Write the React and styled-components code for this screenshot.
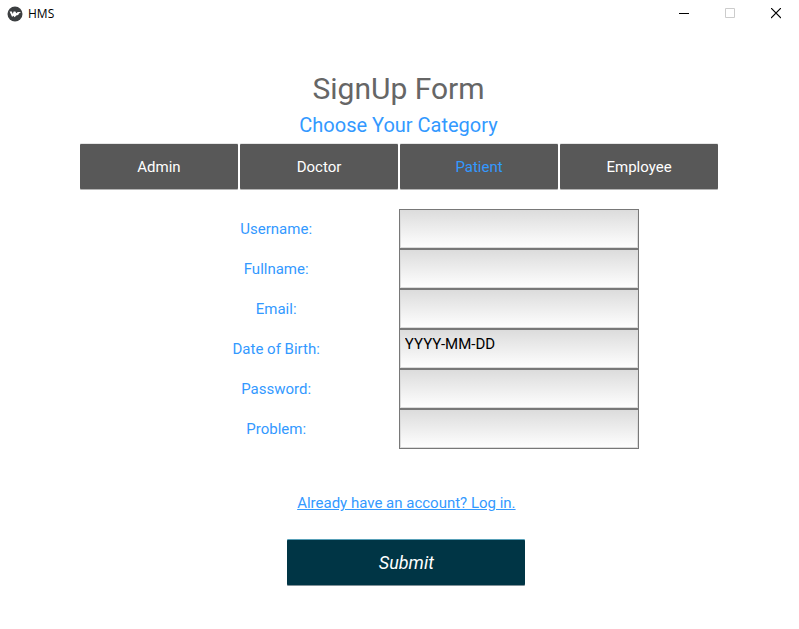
import React, { useState } from "react";
import styled, { createGlobalStyle } from "styled-components";

const GlobalStyle = createGlobalStyle`
  * { box-sizing: border-box; }
  body {
    margin: 0;
    background: #fff;
    font-family: Roboto, "Liberation Sans", sans-serif;
    font-size: 15px;
  }
`;

const TitleBar = styled.header`
  display: flex;
  align-items: center;
  height: 27px;
  padding-left: 7px;
`;

const AppName = styled.span`
  flex: 1;
  margin-left: 5px;
  color: #000;
  font: 12px/16px "Open Sans", "Noto Sans", sans-serif;
`;

const WindowButton = styled.button`
  display: grid;
  place-items: center;
  width: 46px;
  height: 27px;
  padding: 0;
  border: 0;
  background: none;
  color: ${({ disabled }) => (disabled ? "#ccc" : "#000")};
`;

const Page = styled.main`
  display: flex;
  flex-direction: column;
  padding: 42px 10% 43px;
`;

const Title = styled.h1`
  margin: 0;
  padding-right: 2px;
  color: #666;
  font-size: 30px;
  font-weight: 400;
  line-height: 40px;
  text-align: center;
`;

const Subtitle = styled.h2`
  margin: 4px 0 6px;
  padding-right: 2px;
  color: #3399ff;
  font-size: 20px;
  font-weight: 400;
  line-height: 25px;
  text-align: center;
`;

const Categories = styled.nav`
  display: grid;
  grid-template-columns: repeat(4, 1fr);
  gap: 2px;
  padding-right: 1px;
`;

const Button = styled.button`
  height: 45px;
  padding: 0;
  border: 0;
  border-radius: 1px;
  box-shadow: 0 1px 0 #b4b4b4, 0 -1px 0 #e6e6e6;
  background: #585858;
  color: ${({ $active }) => ($active ? "#3399ff" : "#fff")};
  font: inherit;
`;

const Form = styled.form`
  display: flex;
  flex-direction: column;
  padding: 20px 12.5% 0 12.3%;
`;

const Field = styled.div`
  display: grid;
  grid-template-columns: 1fr 1fr;
  align-items: center;
`;

const Label = styled.label`
  padding-right: 5px;
  color: #3399ff;
  line-height: 20px;
  text-align: center;
`;

const Input = styled.input`
  width: 100%;
  height: 40px;
  padding: 0 5px 10px;
  border: 1px solid #787878;
  border-radius: 0;
  outline: none;
  background: linear-gradient(#dcdcdc, #fff);
  box-shadow: inset 0 0 0 1px #dcdcdc;
  color: #000;
  font: inherit;
`;

const Actions = styled.div`
  display: flex;
  flex-direction: column;
  align-items: center;
  gap: 27px;
  padding: 44px 0 0 15px;
`;

const LoginLink = styled.a`
  color: #3399ff;
  line-height: 20px;
  text-underline-offset: 1px;
`;

const Submit = styled(Button)`
  width: 238px;
  background: #003545;
  box-shadow: 0 1px 0 #829299, 0 -1px 0 #58a0b8;
  font-size: 18px;
  font-style: italic;
`;

const CATEGORIES = ["Admin", "Doctor", "Patient", "Employee"];

const FIELDS = [
  { id: "username", label: "Username:" },
  { id: "fullname", label: "Fullname:" },
  { id: "email", label: "Email:" },
  { id: "birth", label: "Date of Birth:", value: "YYYY-MM-DD" },
  { id: "password", label: "Password:", type: "password" },
  { id: "problem", label: "Problem:" },
];

function Logo() {
  return (
    <svg width="16" height="16" viewBox="0 0 16 16" aria-hidden="true">
      <circle cx="8" cy="8" r="7.5" fill="#3c3f41" />
      <path d="M2.6 5.4h2.2l1 2.6.8-2.6h1.8l.8 1.8 1.6-1.3 3.2.1-2 1.4-.8 1.6-2 .4-1.5 1.9-1.4-1.5-1.2 1.3z" fill="#fff" />
    </svg>
  );
}

export default function App() {
  const [category, setCategory] = useState("Patient");

  return (
    <>
      <GlobalStyle />
      <TitleBar>
        <Logo />
        <AppName>HMS</AppName>
        <WindowButton type="button" aria-label="Minimize">
          <svg width="10" height="11" viewBox="0 0 10 11">
            <path d="M0 5.5h10" stroke="currentColor" />
          </svg>
        </WindowButton>
        <WindowButton type="button" aria-label="Maximize" disabled>
          <svg width="10" height="11" viewBox="0 0 10 11">
            <path d="M.5 .5h9v9h-9z" fill="none" stroke="currentColor" />
          </svg>
        </WindowButton>
        <WindowButton type="button" aria-label="Close">
          <svg width="10" height="11" viewBox="0 0 10 11">
            <path d="M0 0l10 10M10 0 0 10" stroke="currentColor" strokeWidth="1.2" />
          </svg>
        </WindowButton>
      </TitleBar>
      <Page>
        <Title>SignUp Form</Title>
        <Subtitle>Choose Your Category</Subtitle>
        <Categories aria-label="Category">
          {CATEGORIES.map((name) => (
            <Button
              key={name}
              type="button"
              $active={name === category}
              aria-pressed={name === category}
              onClick={() => setCategory(name)}
            >
              {name}
            </Button>
          ))}
        </Categories>
        <Form onSubmit={(event) => event.preventDefault()}>
          {FIELDS.map(({ id, label, type = "text", value = "" }) => (
            <Field key={id}>
              <Label htmlFor={id}>{label}</Label>
              <Input id={id} type={type} defaultValue={value} />
            </Field>
          ))}
          <Actions>
            <LoginLink href="#login">Already have an account? Log in.</LoginLink>
            <Submit type="submit">Submit</Submit>
          </Actions>
        </Form>
      </Page>
    </>
  );
}
